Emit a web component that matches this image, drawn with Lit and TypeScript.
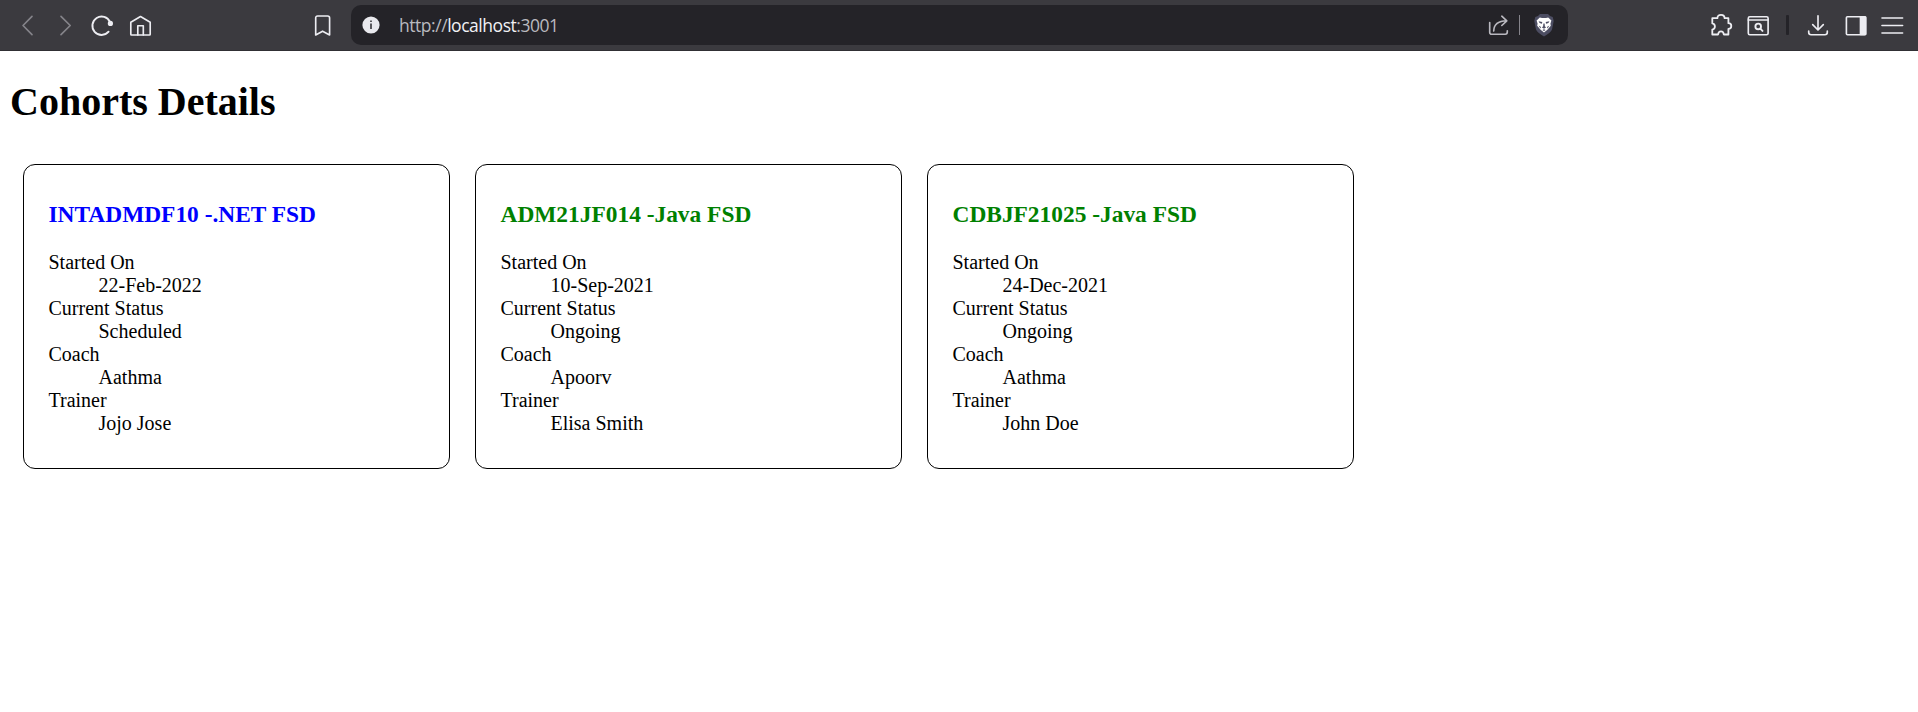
import { LitElement, html, css, svg } from "lit";
import { customElement, property } from "lit/decorators.js";

interface Cohort {
  code: string;
  track: string;
  startedOn: string;
  status: string;
  coach: string;
  trainer: string;
}

const COHORTS: Cohort[] = [
  { code: "INTADMDF10", track: ".NET FSD", startedOn: "22-Feb-2022", status: "Scheduled", coach: "Aathma", trainer: "Jojo Jose" },
  { code: "ADM21JF014", track: "Java FSD", startedOn: "10-Sep-2021", status: "Ongoing", coach: "Apoorv", trainer: "Elisa Smith" },
  { code: "CDBJF21025", track: "Java FSD", startedOn: "24-Dec-2021", status: "Ongoing", coach: "Aathma", trainer: "John Doe" },
];

const ICONS = {
  back: svg`<path d="M17 3.3L8 12.5L17 21.7"/>`,
  forward: svg`<path d="M8 3.3L17.2 12.5L8 21.7"/>`,
  reload: svg`<path d="M20 9A9.2 9.2 0 1 0 18.6 18.7" stroke-width="1.9"/><circle cx="20.4" cy="10.4" r="2.6" fill="currentColor" stroke="none"/>`,
  home: svg`<path d="M2.8 9.2L12.5 3.5L22.2 9.2V21.3Q22.2 22 21.5 22H3.5Q2.8 22 2.8 21.3Z"/><path d="M9.8 22V12.7H15.3V22"/>`,
  bookmark: svg`<path d="M5.7 5Q5.7 3 7.7 3H17.6Q19.6 3 19.6 5V22L12.6 18.2L5.7 22Z"/>`,
  share: svg`<path d="M3.7 9.6V19.2Q3.7 21.2 5.7 21.2H19.3Q21.3 21.2 21.3 18.8V17.7M7.7 18Q8 8 20.6 7.8M15.8 3.2L20.8 7.8L15.8 12.5"/>`,
  extensions: svg`<path d="M3.3 5.2H8.4C8.4 3 9.8 1.8 12 1.8S15.6 3 15.6 5.2H19.4V10.2C21.3 10.2 22.3 11.4 22.3 13S21.3 15.9 19.4 15.9V21.5H14.8C14.6 19.4 13.5 18.4 12 18.4S9.3 19.4 9.1 21.5H3.3V16.6C5 16.2 5.9 15 5.9 13.5S5 10.7 3.3 10.4Z" stroke-width="1.8"/>`,
  find: svg`<rect x="2.3" y="3.7" width="19.8" height="18" rx="1.5"/><path d="M2.3 7H22"/><circle cx="12.2" cy="13.4" r="2.8" stroke-width="1.9"/><path d="M14.3 15.6L16.5 17.9" stroke-width="1.9"/>`,
  download: svg`<path d="M12 2.8V16.8M6.7 11.7L12 17L17.3 11.7M2.7 18.1V19.3Q2.7 21.7 5.1 21.7H18.9Q21.3 21.7 21.3 19.3V18.1"/>`,
  panel: svg`<rect x="2.4" y="3.7" width="19.2" height="18" rx="1"/><path d="M16.5 4H21.6V21.4H16.5Z" fill="currentColor"/>`,
  menu: svg`<path d="M2 5H22.6M2 12.5H22.6M2 20H22.6"/>`,
};

@customElement("browser-bar")
class BrowserBar extends LitElement {
  static styles = css`
    :host {
      display: flex;
      align-items: center;
      box-sizing: border-box;
      height: 51px;
      padding: 0 14px 0 15px;
      background: #3b3a3f;
      border-bottom: 1px solid #302f34;
      color: #ededf2;
    }
    .group { display: flex; align-items: center; gap: 14px; }
    .icon {
      display: block;
      flex: none;
      width: 24px;
      height: 24px;
      fill: none;
      stroke: currentColor;
      stroke-width: 1.65;
      stroke-linecap: round;
      stroke-linejoin: round;
    }
    .muted { color: #85848a; }
    .reload { margin-left: -1px; }
    .saved { margin-left: 158px; }
    .address {
      display: flex;
      align-items: center;
      box-sizing: border-box;
      width: 1217px;
      height: 40px;
      margin-left: 17px;
      padding: 0 13px 0 11px;
      border-radius: 10px;
      background: #242328;
    }
    .info { display: block; width: 18px; height: 18px; }
    .url {
      margin-left: 19px;
      font: 17.5px/24px "Open Sans", "Noto Sans", sans-serif;
      letter-spacing: -0.46px;
      color: #b9b9bf;
      white-space: nowrap;
      flex: 1;
    }
    .host { color: #f2f2f5; }
    .share { color: #b9b8bf; }
    .rule { width: 1px; height: 20px; margin: 0 13px 0 9px; background: #85848b; }
    .shield { display: block; width: 22px; height: 24px; }
    .tools { margin-left: auto; }
    .find { margin-left: -1px; }
    .split {
      width: 3px;
      height: 20px;
      margin: 0 3px 0 2px;
      border-radius: 1px;
      background: #242328;
    }
    .menu { margin-left: -2px; }
  `;

  private icon(name: keyof typeof ICONS, cls = "") {
    return html`<svg class="icon ${cls}" viewBox="0 0 24 24" aria-hidden="true">${ICONS[name]}</svg>`;
  }

  render() {
    return html`
      <div class="group">
        ${this.icon("back", "muted")} ${this.icon("forward", "muted")}
        ${this.icon("reload", "reload")} ${this.icon("home")}
      </div>
      ${this.icon("bookmark", "saved")}
      <div class="address">
        <svg class="info" viewBox="0 0 18 18" aria-hidden="true">
          <circle cx="9" cy="9" r="8.6" fill="#e9e9ee" />
          <path d="M8.1 4.4H9.9V6.1H8.1ZM8.1 7.6H9.9V13H8.1Z" fill="#4a494e" />
        </svg>
        <div class="url">http://<span class="host">localhost</span>:3001</div>
        ${this.icon("share", "share")}
        <div class="rule"></div>
        <svg class="shield" viewBox="0 0 22 24" aria-hidden="true">
          <path d="M7 1H15L17 3L19.7 4L20.7 8L19 16.5Q18 19.5 11 23.5Q4 19.5 3 16.5L1.3 8L2.3 4L5 3Z" fill="#4c4d62" />
          <path d="M6.8 4.4L9 5H13L15.2 4.4L18.4 7.6L17.4 10.8L17.8 12.8L14.4 16.8L11 19.6L7.6 16.8L4.2 12.8L4.6 10.8L3.6 7.6Z" fill="#fff" />
          <path d="M5.6 8.2L9.3 9L8.9 10.8L6.6 10ZM16.4 8.2L12.7 9L13.1 10.8L15.4 10ZM10.4 10.4H11.6L11.9 13.4L13.2 14.2L11 15.8L8.8 14.2L10.1 13.4ZM9.4 17L11 16.3L12.6 17L11 18ZM5.6 12.4L8 14L7.4 15.6ZM16.4 12.4L14 14L14.6 15.6Z" fill="#4c4d62" />
        </svg>
      </div>
      <div class="group tools">
        ${this.icon("extensions")} ${this.icon("find", "find")}
        <div class="split"></div>
        ${this.icon("download")} ${this.icon("panel")} ${this.icon("menu", "menu")}
      </div>
    `;
  }
}

@customElement("cohort-card")
class CohortCard extends LitElement {
  @property({ attribute: false }) cohort!: Cohort;

  static styles = css`
    :host {
      display: block;
      box-sizing: border-box;
      width: 427px;
      height: 305px;
      padding: 12px 24.5px;
      border: 1px solid #000;
      border-radius: 12px;
    }
    .title {
      margin: 24px 0 23px;
      font-size: 23.4px;
      line-height: 27px;
      font-weight: bold;
      color: blue;
    }
    .ongoing { color: green; }
    .facts { margin: 0; line-height: 23px; }
    .value { margin-left: 50px; }
  `;

  render() {
    const c = this.cohort;
    return html`
      <h3 class="title ${c.status === "Ongoing" ? "ongoing" : ""}">${c.code} -${c.track}</h3>
      <dl class="facts">
        <dt>Started On</dt>
        <dd class="value">${c.startedOn}</dd>
        <dt>Current Status</dt>
        <dd class="value">${c.status}</dd>
        <dt>Coach</dt>
        <dd class="value">${c.coach}</dd>
        <dt>Trainer</dt>
        <dd class="value">${c.trainer}</dd>
      </dl>
    `;
  }
}

@customElement("app-root")
class AppRoot extends LitElement {
  static styles = css`
    :host {
      display: block;
      height: 712px;
      overflow: hidden;
      background: #fff;
      color: #000;
      font: 20px "Liberation Serif", "Times New Roman", serif;
    }
    .page { padding: 28px 10px 0; }
    .heading { margin: 0; font-size: 40px; line-height: 46px; font-weight: bold; }
    .cards { display: flex; gap: 25px; padding: 39px 13px 0; }
  `;

  render() {
    return html`
      <browser-bar></browser-bar>
      <main class="page">
        <h1 class="heading">Cohorts Details</h1>
        <div class="cards">
          ${COHORTS.map((c) => html`<cohort-card .cohort=${c}></cohort-card>`)}
        </div>
      </main>
    `;
  }
}
